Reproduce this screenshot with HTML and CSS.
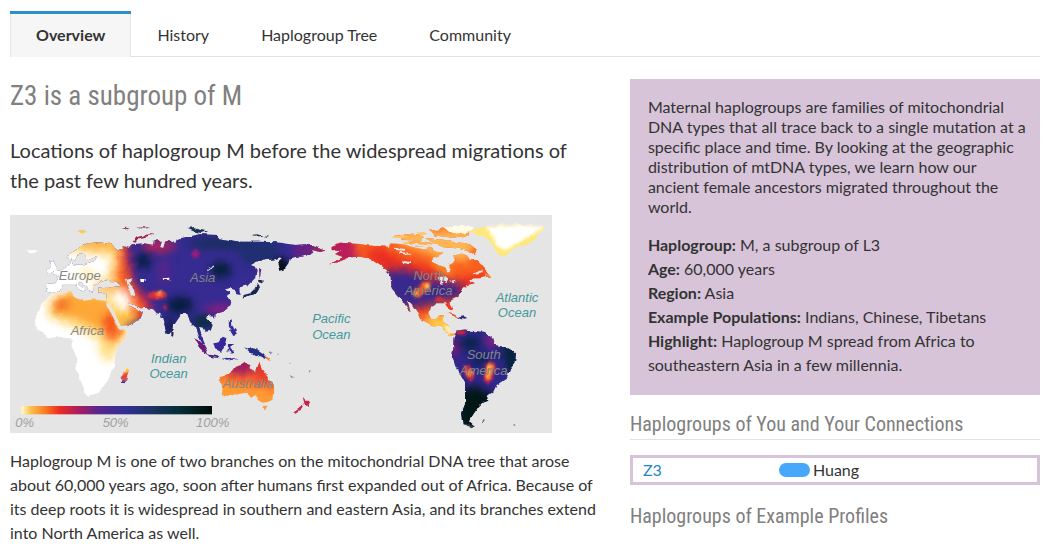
FILE: index.html
```
<!DOCTYPE html>
<html lang="en">
<head>
<meta charset="utf-8">
<title>Maternal haplogroup Z3</title>
<link rel="stylesheet" href="styles.css">
</head>
<body>
<nav class="tabs">
  <a class="tab tab-active" href="#overview" aria-current="page">Overview</a>
  <a class="tab" href="#history">History</a>
  <a class="tab" href="#tree">Haplogroup Tree</a>
  <a class="tab" href="#community">Community</a>
</nav>
<main class="columns">
  <section class="story">
    <h1 class="title">Z3 is a subgroup of M</h1>
    <p class="lead">Locations of haplogroup M before the widespread migrations of the past few hundred years.</p>
    <svg class="map" viewBox="30 15 1626 654" role="img" aria-label="World map of haplogroup M frequency">
      <defs>
        <filter id="soft" x="-50%" y="-50%" width="200%" height="200%" color-interpolation-filters="sRGB"><feGaussianBlur stdDeviation="13"/></filter>
        <filter id="spot" x="-50%" y="-50%" width="200%" height="200%" color-interpolation-filters="sRGB"><feGaussianBlur stdDeviation="5"/></filter>
        <filter id="coast" x="0" y="0" width="100%" height="100%" color-interpolation-filters="sRGB">
          <feTurbulence type="fractalNoise" baseFrequency="0.05" numOctaves="2" seed="4" result="n"/>
          <feDisplacementMap in="SourceGraphic" in2="n" scale="12" xChannelSelector="R" yChannelSelector="G"/>
        </filter>
        <linearGradient id="scale">
          <stop offset="0" stop-color="#fffbd0"/><stop offset=".05" stop-color="#fbc04c"/>
          <stop offset=".13" stop-color="#f9761f"/><stop offset=".2" stop-color="#ee2a22"/>
          <stop offset=".3" stop-color="#a91d60"/><stop offset=".4" stop-color="#5b268c"/>
          <stop offset=".55" stop-color="#303094"/><stop offset=".68" stop-color="#1d3463"/>
          <stop offset=".82" stop-color="#052f39"/><stop offset="1" stop-color="#000d08"/>
        </linearGradient>
        <clipPath id="eurasia"><path d="M140 245L138 222 165 220 178 202 163 192 160 185 185 180 205 167 212 150 220 165 250 163 285 153 292 140 262 150 252 133 238 130 228 152 215 148 200 148 202 136 235 115 262 100 300 97 335 103 350 116 369 120 368 108 385 114 395 103 430 100 460 104 461 92 475 88 485 96 480 112 490 114 495 95 510 90 520 97 540 85 575 78 600 72 650 75 655 85 720 95 775 95 830 97 885 105 915 103 945 110 975 122 960 126 935 120 940 128 925 135 905 140 890 140 870 145 865 160 852 178 838 182 833 160 845 148 840 142 825 148 800 150 775 153 752 165 765 170 770 185 765 205 745 225 725 230 718 240 722 255 710 253 705 240 690 235 675 238 690 250 680 258 690 270 688 290 670 305 645 312 640 320 630 312 618 322 638 345 632 362 618 365 610 352 598 352 605 375 615 400 608 402 592 375 585 350 570 335 562 312 545 312 522 345 520 360 508 375 500 372 487 325 480 322 482 312 470 310 460 298 440 293 420 295 400 285 385 278 395 293 410 297 428 308 422 325 400 340 375 352 360 358 345 330 320 285 318 268 320 252 295 250 295 232 315 234 362 228 350 215 335 217 320 207 305 212 285 228 278 245 265 240 255 225 240 215 235 220 255 238 245 245 225 222 205 222 190 222 178 245 160 250Z M142 190L140 178 152 165 150 152 160 150 172 182Z"/></clipPath>
        <clipPath id="africa"><path d="M150 255L175 250 215 245 222 260 250 272 280 268 318 272 322 290 345 330 358 358 385 362 380 380 345 420 348 445 345 470 328 490 325 510 295 550 260 558 250 530 228 480 235 445 215 410 215 390 180 380 145 385 115 360 105 345 110 315 130 280Z M382 470L388 482 374 520 363 516 362 500Z"/></clipPath>
        <clipPath id="oceania"><path d="M658 502L690 490 705 470 725 465 735 458 752 462 748 475 768 485 778 455 785 478 798 495 822 525 823 550 810 575 785 578 770 570 768 555 755 562 740 545 720 548 690 558 665 555 668 535ZM786 588L802 587 796 600Z"/></clipPath>
        <clipPath id="northam"><path d="M995 108L1020 98 1080 102 1125 108 1170 110 1172 100 1210 103 1240 112 1270 118 1295 115 1305 125 1330 128 1320 138 1300 142 1295 155 1315 165 1335 172 1342 185 1350 182 1348 165 1365 155 1360 135 1380 128 1400 135 1410 150 1430 150 1445 165 1455 178 1472 198 1440 205 1420 205 1410 212 1425 220 1400 225 1390 235 1380 245 1375 260 1355 270 1348 278 1358 298 1352 304 1340 280 1310 280 1290 290 1285 310 1295 330 1315 325 1320 315 1332 315 1325 335 1345 345 1348 365 1368 372 1355 378 1342 368 1320 350 1295 345 1265 330 1250 308 1235 285 1220 270 1232 303 1225 300 1210 275 1192 255 1175 235 1172 205 1160 180 1142 165 1120 150 1080 140 1050 142 1010 158 990 160 1030 142 1005 132 1025 124 995 120Z M1180 78L1220 72 1270 78 1262 92 1210 90ZM1220 96L1260 92 1300 100 1290 112 1240 108ZM1275 84L1320 88 1360 96 1400 100 1430 118 1425 132 1400 122 1370 115 1330 112 1300 98ZM1290 62L1340 54 1400 58 1405 76 1360 84 1300 76Z"/></clipPath>
        <clipPath id="southam"><path d="M1360 385L1370 362 1395 358 1410 362 1450 365 1480 385 1485 405 1520 412 1548 430 1545 455 1530 475 1520 505 1490 525 1480 545 1460 560 1465 572 1445 580 1435 590 1425 605 1415 620 1410 635 1424 648 1388 642 1383 610 1395 580 1395 520 1370 475 1355 440 1360 415Z"/></clipPath>
      </defs>
      <rect x="30" y="15" width="1626" height="654" fill="#e5e5e5"/>
      <g filter="url(#coast)">
        <rect x="30" y="15" width="1626" height="654" fill="none"/>
        <g clip-path="url(#eurasia)">
          <rect x="100" y="60" width="900" height="360" fill="#352b91"/>
          <g filter="url(#soft)">
            <path fill="#cc234d" d="M90 50H376L400 215 450 275 460 310 350 370H90Z"/>
            <path fill="#fa671f" d="M80 40H360L380 190 405 245 440 300 360 370H80Z"/>
            <path fill="#ffdc83" d="M80 40H335L356 140 345 220 398 295 365 370H80Z"/>
            <path fill="#fff" d="M80 115L270 130 335 140 325 200 270 210 375 235 400 285 370 305 330 255 190 280 80 270Z"/>
            <ellipse cx="300" cy="100" rx="70" ry="18" fill="#fdb040"/>
            <ellipse cx="320" cy="238" rx="40" ry="12" fill="#fbb64c"/>
            <ellipse cx="262" cy="190" rx="20" ry="14" fill="#ffeea0"/>
            <ellipse cx="370" cy="328" rx="45" ry="18" fill="#ffbc38"/>
            <ellipse cx="430" cy="153" rx="22" ry="26" fill="#031f43"/>
            <ellipse cx="540" cy="285" rx="38" ry="24" fill="#041c3a"/>
            <ellipse cx="663" cy="180" rx="30" ry="25" fill="#04203b"/>
            <ellipse cx="690" cy="100" rx="130" ry="16" fill="#152e56"/>
            <path fill="#1f2f70" d="M690 90H840L830 160 740 165Z"/>
            <ellipse cx="845" cy="175" rx="26" ry="30" fill="#000f0c"/>
            <ellipse cx="610" cy="335" rx="35" ry="20" fill="#062c3c"/>
            <ellipse cx="510" cy="350" rx="20" ry="35" fill="#17225b"/>
            <ellipse cx="475" cy="108" rx="50" ry="18" fill="#bd2257"/>
            <ellipse cx="490" cy="185" rx="20" ry="40" fill="#55268b"/>
            <ellipse cx="660" cy="298" rx="48" ry="14" fill="#8f1d82"/>
            <ellipse cx="910" cy="120" rx="30" ry="30" fill="#6c2184"/>
            <ellipse cx="965" cy="118" rx="28" ry="16" fill="#d21d52"/>
          </g>
          <g filter="url(#spot)">
            <ellipse cx="470" cy="256" rx="30" ry="12" fill="#d92c40"/>
            <circle cx="478" cy="250" r="8" fill="#ffa43e"/>
            <circle cx="586" cy="132" r="11" fill="#a01c78"/>
            <circle cx="497" cy="292" r="7" fill="#d0234d"/>
          </g>
          <path fill="#e5e5e5" d="M378 210L398 205 388 218 402 240 406 258 392 256 386 235Z"/>
          <path fill="#fff" d="M420 208L438 205 434 217 423 219ZM488 205L508 203 508 209 490 210Z"/>
          <path stroke="#d8dbe2" stroke-width="4" fill="none" d="M622 182L642 168"/>
        </g>
        <g clip-path="url(#africa)">
          <rect x="90" y="230" width="310" height="340" fill="#fff"/>
          <g filter="url(#soft)">
            <path fill="#ffe08a" d="M145 265L220 235 340 260 390 360 340 440 325 460 303 440 290 385 200 345 140 320Z"/>
            <path fill="#fda737" d="M160 270L215 245 320 265 380 365 345 410 300 360 220 325 160 312Z"/>
            <ellipse cx="184" cy="285" rx="22" ry="19" fill="#f3681e"/>
            <ellipse cx="334" cy="345" rx="24" ry="42" fill="#f6531e"/>
          </g>
          <g filter="url(#spot)"><path fill="#ffc23c" d="M365 465H400V490H365Z"/><path fill="#e52c28" d="M355 490H395V505H355Z"/><path fill="#55176d" d="M355 508H390V530H355Z"/></g>
        </g>
        <path fill="#fff" d="M78 119L90 122 105 119 116 123 104 130 88 129Z"/>
        <path fill="#f8ca65" d="M225 61L250 59 260 65 246 71 237 66Z"/>
        <g clip-path="url(#oceania)">
          <rect x="650" y="450" width="180" height="160" fill="#ff9b34"/>
          <g filter="url(#soft)">
            <path fill="#f9622a" d="M645 440H830V550L800 530 720 525 645 500Z"/>
            <path fill="#9c1c63" d="M685 440H770L765 485 692 498Z"/>
            <path fill="#e23532" d="M770 440H805V520H775Z"/>
          </g>
        </g>
        <g fill="#34289a">
          <path d="M640 400L655 398 668 380 680 385 674 405 664 425 645 418Z"/>
          <path d="M684 402L703 402 690 410 700 425 692 428 688 414 682 428Z"/>
          <path d="M686 330L692 328 694 345 702 352 696 354 687 345ZM690 360L698 352 706 360 710 375 700 378 694 368Z"/>
          <path fill="#6a197b" d="M582 382L592 386 612 405 624 428 616 432 600 415Z"/>
          <path fill="#4a217f" d="M622 433L640 436 658 440 656 445 628 440Z"/>
          <path d="M665 446L680 443 690 447 705 444 712 448 680 452Z"/>
          <path fill="#263082" d="M732 412L745 416 758 414 775 420 790 430 804 446 792 444 780 438 768 442 756 432 745 422Z"/>
          <path fill="#f8863a" d="M790 438L803 442 812 453 800 450Z"/>
          <path fill="#62218a" d="M777 172L784 176 781 198 778 205Z"/>
          <path fill="#192654" d="M776 206L790 213 780 219 774 214Z"/>
          <path fill="#192654" d="M773 222L778 236 770 249 755 255 741 258 728 266 731 255 750 250 762 238Z"/>
          <path d="M688 278L693 283 690 292 686 288ZM637 317L645 316 641 326Z"/>
          <path fill="#9d1e54" d="M398 95L410 82 435 74 465 72 444 79 418 85 406 98Z"/>
          <path fill="#8b4368" d="M365 55L380 53 392 57 378 58ZM408 53L432 51 450 53 428 56Z"/>
          <path fill="#173455" d="M562 56L585 54 602 60 622 64 602 69 580 64ZM756 75L775 73 788 77 768 80ZM790 80L812 79 801 83Z"/>
          <path fill="#22234e" d="M514 367L521 370 519 380 514 378Z"/>
          <path fill="#8f8f9b" d="M806 430L822 425 814 434ZM832 430L837 433 833 435ZM869 495L882 502 874 504ZM926 483L933 479 929 488ZM868 452L873 462 869 460Z"/>
          <path fill="#c62548" d="M908 560L918 572 931 572 922 589 914 584ZM911 586L905 598 888 609 882 606 895 596Z"/>
        </g>
        <g clip-path="url(#northam)">
          <rect x="980" y="40" width="500" height="350" fill="#fa611e"/>
          <g filter="url(#soft)">
            <path fill="#ba1d5b" d="M960 70H1055L1080 165H960Z"/>
            <path fill="#e92d24" d="M1090 125L1140 110 1210 150 1320 175 1345 210 1480 185 1370 290 1310 265 1190 235Z"/>
            <path fill="#39288e" d="M1155 183L1220 178 1290 210 1390 222 1380 262 1320 276 1260 310 1200 290 1150 240Z"/>
            <path fill="#fdb653" d="M1200 60H1440L1400 155 1310 140 1190 96Z"/>
            <path fill="#f69a27" d="M1290 150H1340L1355 205 1310 180Z"/>
            <path fill="#e93823" d="M1240 290L1290 282 1280 316 1250 320Z"/>
            <path fill="#ffcc4a" d="M1258 325L1370 305 1380 390 1310 370Z"/>
          </g>
          <g filter="url(#spot)">
            <path fill="#f2521f" d="M1272 215L1292 210 1288 240 1255 265 1235 248Z"/>
            <circle cx="1282" cy="228" r="8" fill="#ffd15c"/><circle cx="1248" cy="251" r="8" fill="#ffb243"/>
            <ellipse cx="1318" cy="267" rx="16" ry="7" fill="#e52e31"/>
            <path fill="#ef3424" d="M1340 278H1365V310H1345Z"/>
            <path fill="#fff7d0" d="M1330 350L1355 350 1350 375Z"/>
          </g>
          <path fill="#e5e5e5" d="M1312 202L1335 198 1346 207 1340 219 1326 214 1328 225 1320 223 1322 210ZM1350 215L1368 212 1360 220Z"/>
          <path stroke="#e5e5e5" stroke-width="6" fill="none" d="M1195 128L1230 132M1182 116L1215 120M1235 104L1300 110 1340 124 1390 128M1210 155L1230 160M1420 190L1445 184"/>
        </g>
        <path fill="#ffc766" d="M1172 83L1205 75 1225 80 1190 89ZM1205 94L1232 98 1218 104ZM1245 68L1272 66 1285 72 1262 76Z"/>
        <path fill="#fffbe6" d="M1330 50L1380 45 1425 48 1410 66 1370 74 1345 64Z"/>
        <path fill="#ffe879" d="M1405 66L1450 50 1520 44 1640 51 1620 64 1605 90 1580 105 1550 112 1525 125 1515 142 1497 138 1480 110 1465 85 1430 75Z"/>
        <path filter="url(#spot)" fill="#fff" d="M1455 52L1530 45 1635 50 1590 78 1550 100 1515 120 1490 106 1475 72Z"/>
        <path fill="#f48a36" d="M1454 189L1466 190 1474 202 1455 198Z"/>
        <path fill="#e1532c" d="M1341 309L1365 313 1378 321 1360 318Z"/>
        <path fill="#39277d" d="M1372 324L1388 319 1408 326 1390 329ZM1158 182L1166 192 1162 194Z"/>
        <g clip-path="url(#southam)">
          <rect x="1340" y="350" width="220" height="310" fill="#2f278c"/>
          <g filter="url(#soft)">
            <ellipse cx="1362" cy="415" rx="14" ry="25" fill="#871a72"/>
            <ellipse cx="1478" cy="390" rx="24" ry="18" fill="#93207c"/>
            <ellipse cx="1410" cy="400" rx="34" ry="20" fill="#072448"/>
            <ellipse cx="1440" cy="450" rx="32" ry="18" fill="#0c2355"/>
            <path fill="#04243a" d="M1500 405L1560 400V490L1525 490Z"/>
            <path fill="#011716" d="M1380 545L1425 525 1480 555 1450 660H1370Z"/>
          </g>
          <g filter="url(#spot)">
            <path fill="#e3293e" d="M1392 466L1414 472 1424 500 1412 516 1396 497ZM1458 462L1482 456 1488 478 1468 524 1448 507Z"/>
            <circle cx="1409" cy="490" r="9" fill="#ff9b36"/>
            <path fill="#ffc040" d="M1463 466L1481 464 1467 510 1457 504Z"/>
            <ellipse cx="1385" cy="367" rx="17" ry="7" fill="#d92542"/>
          </g>
        </g>
        <path fill="#354045" d="M1444 631L1455 632 1448 636ZM1540 643L1547 645 1542 647ZM1390 641L1425 645 1412 652Z"/>
      </g>
      <path fill="none" stroke="#e5e5e5" stroke-width="9" d="M322 282L340 312 360 353 382 350"/>
      <rect x="64" y="588" width="572" height="25" fill="url(#scale)"/>
      <g class="map-land">
        <text x="239" y="209">Europe</text><text x="262" y="376">Africa</text><text x="608" y="215">Asia</text>
        <text x="744" y="535">Australia</text><text x="1288" y="209">North</text><text x="1286" y="256">America</text>
        <text x="1451" y="446">South</text><text x="1451" y="494">America</text>
      </g>
      <g class="map-ocean">
        <text x="506" y="458">Indian</text><text x="506" y="504">Ocean</text>
        <text x="994" y="339">Pacific</text><text x="994" y="387">Ocean</text>
        <text x="1551" y="275">Atlantic</text><text x="1551" y="321">Ocean</text>
      </g>
      <g class="map-scale">
        <text x="74" y="650">0%</text><text x="347" y="650">50%</text><text x="638" y="650">100%</text>
      </g>
    </svg>
    <p class="body-text">Haplogroup M is one of two branches on the mitochondrial DNA tree that arose about 60,000 years ago, soon after humans first expanded out of Africa. Because of its deep roots it is widespread in southern and eastern Asia, and its branches extend into North America as well.</p>
  </section>
  <aside class="side">
    <div class="facts">
      <p class="facts-intro">Maternal haplogroups are families of mitochondrial DNA types that all trace back to a single mutation at a specific place and time. By looking at the geographic distribution of mtDNA types, we learn how our ancient female ancestors migrated throughout the world.</p>
      <p class="fact"><b>Haplogroup:</b> M, a subgroup of L3</p>
      <p class="fact"><b>Age:</b> 60,000 years</p>
      <p class="fact"><b>Region:</b> Asia</p>
      <p class="fact"><b>Example Populations:</b> Indians, Chinese, Tibetans</p>
      <p class="fact"><b>Highlight:</b> Haplogroup M spread from Africa to southeastern Asia in a few millennia.</p>
    </div>
    <h2 class="subtitle subtitle-ruled">Haplogroups of You and Your Connections</h2>
    <div class="connection">
      <a class="connection-group" href="#z3">Z3</a>
      <span class="person"><span class="pill"></span>Huang</span>
    </div>
    <h2 class="subtitle">Haplogroups of Example Profiles</h2>
  </aside>
</main>
</body>
</html>
```
FILE: styles.css
```
* { box-sizing: border-box; }
body {
  margin: 0;
  padding: 11px 13px 0 10px;
  background: #fff;
  color: #333;
  font-family: Lato, "Open Sans", sans-serif;
  font-size: 16px;
}
h1, h2, p { margin: 0; }
a { text-decoration: none; }

.tabs { display: flex; border-bottom: 1px solid #e2e2e2; }
.tab {
  padding: 12px 26px;
  border-top: 3px solid transparent;
  color: #333;
  line-height: 18px;
}
.tab-active {
  margin-bottom: -1px;
  padding-bottom: 13px;
  border-top-color: #2c8fcb;
  background: #f6f6f6;
  box-shadow: inset 1px 0 #e6e6e6, inset -1px 0 #e6e6e6;
  font-weight: 700;
}

.columns {
  display: grid;
  grid-template-columns: minmax(0, 10fr) minmax(0, 7fr);
  gap: 34px;
  padding-top: 22px;
}
.title, .subtitle {
  color: #808080;
  font-family: "Roboto Condensed", "Liberation Sans Narrow", sans-serif;
  font-weight: 400;
}
.title { font-size: 27px; line-height: 34px; }
.lead { margin: 22px 0 20px; font-size: 20px; line-height: 30px; }
.map { display: block; width: 100%; max-width: 542px; }
.body-text { margin-top: 16px; line-height: 24px; }

.map text {
  font-family: "Liberation Sans", sans-serif;
  font-style: italic;
  font-size: 39px;
  text-anchor: middle;
}
.map-land { fill: #858585; }
.map-ocean { fill: #43999b; }
.map-scale { fill: #a0a0a0; }

.facts { padding: 18px 14px 18px 18px; background: #d7c4d9; }
.facts-intro { margin-bottom: 16px; line-height: 20px; }
.fact { line-height: 24px; }
.subtitle { padding-top: 16px; font-size: 20px; line-height: 26px; }
.subtitle-ruled { padding-bottom: 2px; border-bottom: 1px solid #e2e2e2; }
.connection {
  display: grid;
  grid-template-columns: 1fr 2fr;
  align-items: center;
  margin: 15px 0 2px;
  padding: 3px 10px;
  border: 3px solid #d7c4d9;
  line-height: 18px;
}
.connection-group { color: #1b87c9; }
.person { display: flex; align-items: center; gap: 3px; padding-left: 8px; }
.pill { width: 31px; height: 14px; border-radius: 7px; background: #47a7fb; }
```
